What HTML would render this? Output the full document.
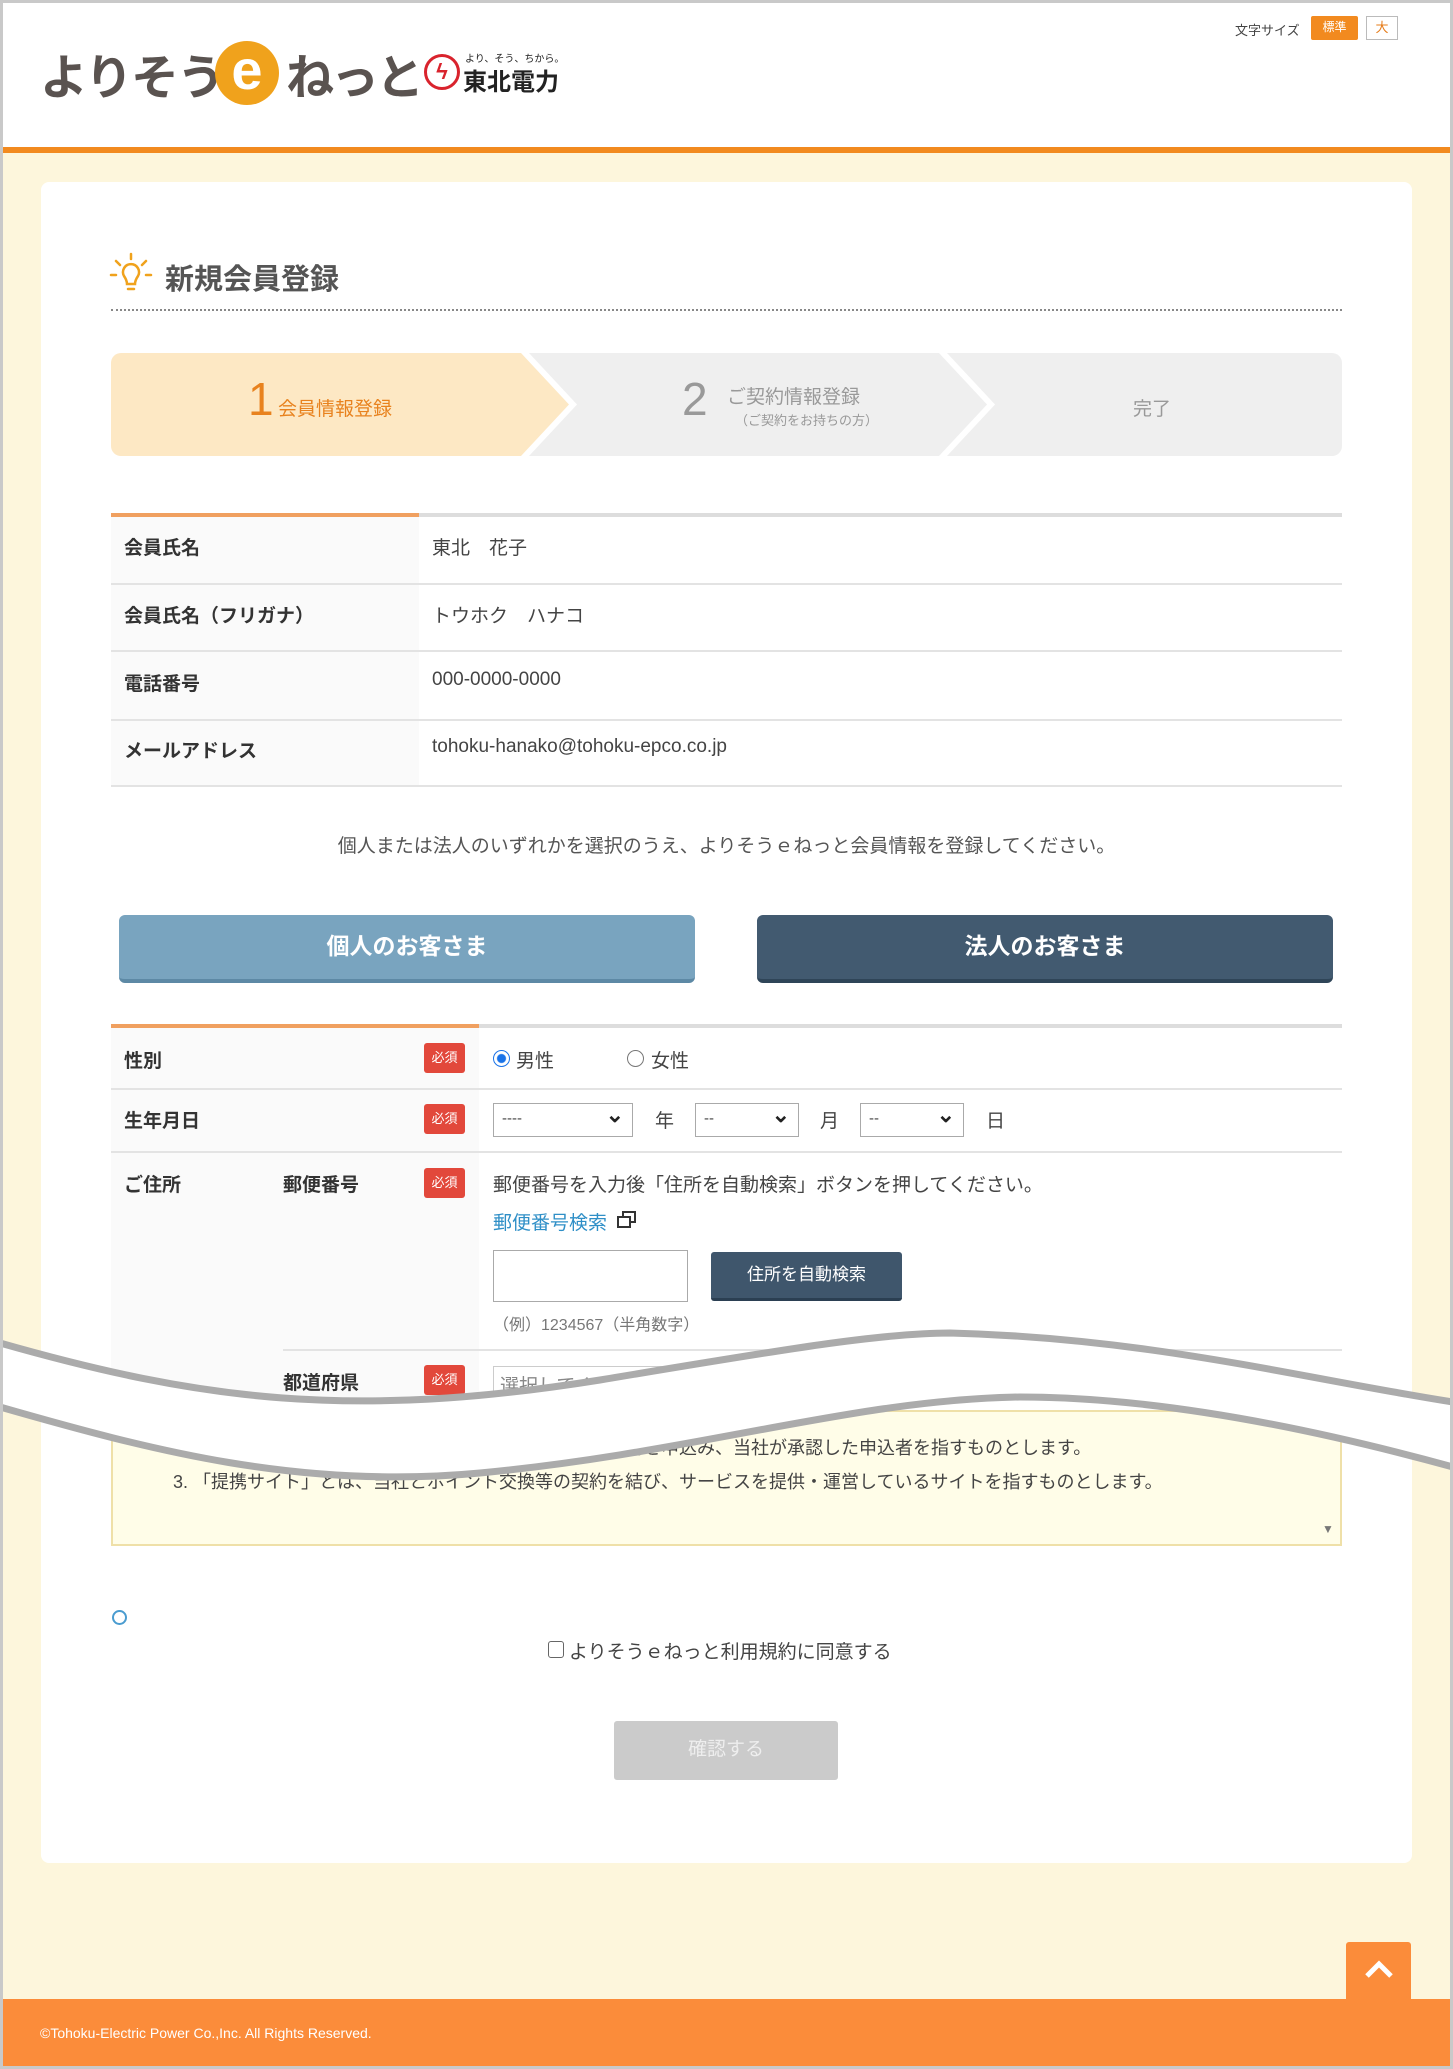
<!DOCTYPE html>
<html><head><meta charset="utf-8">
<style>
*{margin:0;padding:0;box-sizing:border-box}
body{width:1453px;height:2069px;position:relative;overflow:hidden;background:#fdf6dc;font-family:"Liberation Sans","Noto Sans CJK JP",sans-serif;color:#333}
.a{position:absolute}
.frame{position:absolute;left:0;top:0;width:1453px;height:2069px;border:3px solid #c9c9c9;z-index:50;pointer-events:none}
.t{position:absolute;white-space:nowrap}
.lbl{font-weight:bold;font-size:19px;color:#333}
.val{font-size:19px;color:#444}
.hr{position:absolute;height:2px;background:#e3e3e3}
.req{position:absolute;left:424px;width:41px;height:30px;background:#e2483b;color:#fff;font-size:13px;text-align:center;line-height:30px;border-radius:3px}
.sel{position:absolute;height:34px;border:1px solid #aaa;background:#fff;font-size:15px;padding:6px 8px;color:#444}
.sel:after{content:"⌄";position:absolute;right:8px;top:-2px;font-size:22px;font-weight:bold;color:#222}
</style></head><body>
<div class="frame"></div>
<!-- header -->
<div class="a" style="left:0;top:0;width:1453px;height:148px;background:#fff"></div>
<div class="a" style="left:0;top:147px;width:1453px;height:6px;background:#f28a1f"></div>
<div class="t" style="left:40px;top:38px;font-size:48px;font-weight:bold;color:#5a5350;letter-spacing:-2px">よりそう</div>
<div class="a" style="left:215px;top:41px;width:64px;height:64px;border-radius:50%;background:#f0a21c;color:#fff;font-size:56px;font-weight:bold;text-align:center;line-height:58px">e</div>
<div class="t" style="left:286px;top:38px;font-size:48px;font-weight:bold;color:#5a5350;letter-spacing:-3px">ねっと</div>
<div class="a" style="left:424px;top:54px;width:36px;height:36px;border:3px solid #d9232d;border-radius:50%;color:#d9232d;font-size:22px;text-align:center;line-height:30px;font-weight:bold">ϟ</div>
<div class="t" style="left:465px;top:50px;font-size:10px;color:#222">より、そう、ちから。</div>
<div class="t" style="left:463px;top:62px;font-size:24px;font-weight:bold;color:#222">東北電力</div>
<div class="t" style="left:1235px;top:20px;font-size:13px;color:#444">文字サイズ</div>
<div class="a" style="left:1311px;top:16px;width:47px;height:24px;background:#f28a1f;color:#fff;font-size:12px;text-align:center;line-height:22px;border-radius:2px">標準</div>
<div class="a" style="left:1366px;top:16px;width:32px;height:24px;border:1px solid #bbb;color:#e67c1a;font-size:13px;text-align:center;line-height:22px;background:#fff">大</div>

<!-- card -->
<div class="a" style="left:41px;top:182px;width:1371px;height:1681px;background:#fff;border-radius:8px"></div>
<svg class="a" style="left:108px;top:250px" width="46" height="46" viewBox="0 0 46 46"><g stroke="#f0a21c" stroke-width="2.5" fill="none" stroke-linecap="round"><path d="M23 4v5M8 11l4 4M38 11l-4 4M3 25h5M43 25h-5"/><path d="M16 26a8 8 0 1 1 14 0c-2 3-3 5-3 8h-8c0-3-1-5-3-8z"/><path d="M20 39h6"/></g></svg>
<div class="t" style="left:165px;top:256px;font-size:29px;font-weight:bold;color:#555">新規会員登録</div>
<div class="a" style="left:111px;top:309px;width:1231px;border-top:2px dotted #888"></div>

<!-- steps -->
<div class="a" style="left:111px;top:353px;width:1231px;height:103px;background:#efefef;border-radius:10px"></div>
<div class="a" style="left:111px;top:353px;width:884px;height:103px;background:#fff;clip-path:polygon(0 0,836px 0,884px 50%,836px 100%,0 100%)"></div>
<div class="a" style="left:111px;top:353px;width:876px;height:103px;background:#efefef;border-radius:10px 0 0 10px;clip-path:polygon(0 0,828px 0,876px 50%,828px 100%,0 100%)"></div>
<div class="a" style="left:111px;top:353px;width:466px;height:103px;background:#fff;clip-path:polygon(0 0,418px 0,466px 50%,418px 100%,0 100%)"></div>
<div class="a" style="left:111px;top:353px;width:458px;height:103px;background:#fde8c4;border-radius:10px 0 0 10px;clip-path:polygon(0 0,410px 0,458px 50%,410px 100%,0 100%)"></div>
<div class="t" style="left:248px;top:372px;font-size:46px;color:#e8821e;font-weight:300">1</div>
<div class="t" style="left:278px;top:394px;font-size:19px;color:#e8821e">会員情報登録</div>
<div class="t" style="left:682px;top:372px;font-size:46px;color:#999;font-weight:300">2</div>
<div class="t" style="left:727px;top:382px;font-size:19px;color:#999">ご契約情報登録</div>
<div class="t" style="left:735px;top:410px;font-size:13px;color:#999">（ご契約をお持ちの方）</div>
<div class="t" style="left:1133px;top:394px;font-size:19px;color:#999">完了</div>

<!-- info table -->
<div class="a" style="left:111px;top:514px;width:308px;height:272px;background:#fafafa"></div>
<div class="hr" style="left:111px;top:513px;width:1231px;height:4px;background:#ddd"></div>
<div class="hr" style="left:111px;top:513px;width:308px;height:4px;background:#f0a060"></div>
<div class="hr" style="left:111px;top:583px;width:1231px"></div>
<div class="hr" style="left:111px;top:650px;width:1231px"></div>
<div class="hr" style="left:111px;top:719px;width:1231px"></div>
<div class="hr" style="left:111px;top:785px;width:1231px"></div>
<div class="t lbl" style="left:124px;top:533px">会員氏名</div><div class="t val" style="left:432px;top:533px">東北　花子</div>
<div class="t lbl" style="left:124px;top:601px">会員氏名（フリガナ）</div><div class="t val" style="left:432px;top:601px">トウホク　ハナコ</div>
<div class="t lbl" style="left:124px;top:669px">電話番号</div><div class="t val" style="left:432px;top:669px">000-0000-0000</div>
<div class="t lbl" style="left:124px;top:736px">メールアドレス</div><div class="t val" style="left:432px;top:736px">tohoku-hanako@tohoku-epco.co.jp</div>

<div class="t" style="left:0;width:1453px;text-align:center;top:831px;font-size:19px;color:#555">個人または法人のいずれかを選択のうえ、よりそうｅねっと会員情報を登録してください。</div>

<div class="a" style="left:119px;top:915px;width:576px;height:68px;background:#79a4bf;border-radius:6px;border-bottom:4px solid #5d89a5;color:#fff;font-weight:bold;font-size:23px;text-align:center;line-height:62px">個人のお客さま</div>
<div class="a" style="left:757px;top:915px;width:576px;height:68px;background:#425a70;border-radius:6px;border-bottom:4px solid #2f4558;color:#fff;font-weight:bold;font-size:23px;text-align:center;line-height:62px">法人のお客さま</div>

<!-- form table -->
<div class="a" style="left:111px;top:1025px;width:368px;height:420px;background:#fafafa"></div>
<div class="hr" style="left:111px;top:1024px;width:1231px;height:4px;background:#ddd"></div>
<div class="hr" style="left:111px;top:1024px;width:368px;height:4px;background:#f0a060"></div>
<div class="hr" style="left:111px;top:1088px;width:1231px"></div>
<div class="hr" style="left:111px;top:1151px;width:1231px"></div>
<div class="hr" style="left:283px;top:1349px;width:1059px"></div>
<div class="t lbl" style="left:124px;top:1046px">性別</div><div class="req" style="top:1043px">必須</div>
<div class="a" style="left:493px;top:1050px;width:17px;height:17px;border-radius:50%;border:1px solid #1a73e8;background:radial-gradient(circle,#1a73e8 0 4px,#fff 5px)"></div>
<div class="t val" style="left:516px;top:1046px">男性</div>
<div class="a" style="left:627px;top:1050px;width:17px;height:17px;border-radius:50%;border:1px solid #777;background:#fff"></div>
<div class="t val" style="left:651px;top:1046px">女性</div>

<div class="t lbl" style="left:124px;top:1106px">生年月日</div><div class="req" style="top:1104px">必須</div>
<div class="sel" style="left:493px;top:1103px;width:140px">----</div><div class="t val" style="left:655px;top:1106px">年</div>
<div class="sel" style="left:695px;top:1103px;width:104px">--</div><div class="t val" style="left:820px;top:1106px">月</div>
<div class="sel" style="left:860px;top:1103px;width:104px">--</div><div class="t val" style="left:986px;top:1106px">日</div>

<div class="t lbl" style="left:124px;top:1170px">ご住所</div><div class="t lbl" style="left:283px;top:1170px">郵便番号</div><div class="req" style="top:1168px">必須</div>
<div class="t val" style="left:493px;top:1170px">郵便番号を入力後「住所を自動検索」ボタンを押してください。</div>
<div class="t" style="left:493px;top:1208px;font-size:19px;color:#2f8fc7">郵便番号検索</div>
<div class="a" style="left:622px;top:1211px;width:14px;height:12px;border:2px solid #333"></div><div class="a" style="left:617px;top:1216px;width:14px;height:12px;border:2px solid #333;background:#fff"></div>
<div class="a" style="left:493px;top:1250px;width:195px;height:52px;border:1px solid #aaa;background:#fff"></div>
<div class="a" style="left:711px;top:1252px;width:191px;height:49px;background:#3f566c;border-radius:3px;border-bottom:3px solid #2b3f52;color:#fff;font-size:17px;text-align:center;line-height:46px">住所を自動検索</div>
<div class="t" style="left:493px;top:1311px;font-size:16px;color:#777">（例）1234567（半角数字）</div>
<div class="t lbl" style="left:283px;top:1368px">都道府県</div><div class="req" style="top:1365px">必須</div>
<div class="a" style="left:493px;top:1366px;width:260px;height:34px;border:1px solid #ccc;background:#fff;font-size:19px;color:#888;padding:4px 6px">選択してください</div>

<!-- terms box -->
<div class="a" style="left:111px;top:1410px;width:1231px;height:136px;background:#fffde8;border:2px solid #efe0a8"></div>
<div class="t" style="left:173px;top:1434px;font-size:18px;color:#444">2. 「会員」とは、本規約に同意のうえ、当サービスの利用を申込み、当社が承認した申込者を指すものとします。</div>
<div class="t" style="left:173px;top:1468px;font-size:18px;color:#444">3. 「提携サイト」とは、当社とポイント交換等の契約を結び、サービスを提供・運営しているサイトを指すものとします。</div>
<div class="t" style="left:1322px;top:1522px;font-size:12px;color:#777">▼</div>

<!-- wave -->
<svg class="a" style="left:0;top:0;z-index:10" width="1453" height="2069">
<path d="M0,1343 C200,1400 350,1420 600,1380 C780,1350 880,1333 950,1333 C1150,1338 1300,1378 1453,1402 L1453,1467 C1300,1425 1150,1397 1020,1397 C850,1400 700,1452 480,1473 C300,1490 150,1450 0,1407 Z" fill="#fff"/>
<path d="M0,1343 C200,1400 350,1420 600,1380 C780,1350 880,1333 950,1333 C1150,1338 1300,1378 1453,1402" fill="none" stroke="#ababab" stroke-width="7"/>
<path d="M1453,1467 C1300,1425 1150,1397 1020,1397 C850,1400 700,1452 480,1473 C300,1490 150,1450 0,1407" fill="none" stroke="#ababab" stroke-width="7"/>
</svg>

<div class="a" style="left:112px;top:1610px;width:15px;height:15px;border:2px solid #4a9cd0;border-radius:50%"></div>
<div class="a" style="left:548px;top:1641px;width:16px;height:17px;border:1px solid #666;border-radius:3px;background:#fff"></div>
<div class="t val" style="left:569px;top:1637px">よりそうｅねっと利用規約に同意する</div>
<div class="a" style="left:614px;top:1721px;width:224px;height:59px;background:#cbcbcb;border-radius:3px;color:#eee;font-size:19px;text-align:center;line-height:58px">確認する</div>

<!-- top button & footer -->
<div class="a" style="left:1346px;top:1942px;width:65px;height:60px;background:#fb8c3a;border-radius:3px 3px 0 0"></div>
<svg class="a" style="left:1362px;top:1957px" width="34" height="24"><path d="M5 19 L17 7 L29 19" stroke="#fff" stroke-width="5" fill="none"/></svg>
<div class="a" style="left:0;top:1999px;width:1453px;height:70px;background:#fb8c3a"></div>
<div class="t" style="left:40px;top:2025px;font-size:14px;color:#fff">©Tohoku-Electric Power Co.,Inc. All Rights Reserved.</div>
</body></html>
